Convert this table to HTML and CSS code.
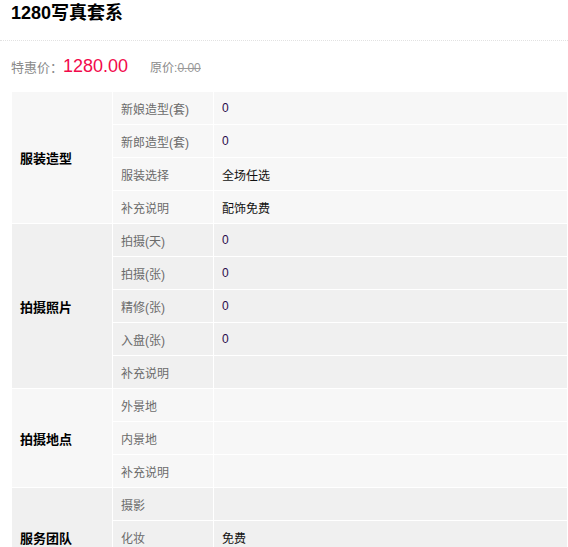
FILE: index.html
```html
<!DOCTYPE html>
<html lang="zh-CN">
<head>
    <meta charset="UTF-8">
    <meta name="viewport" content="width=device-width, initial-scale=1.0">
    <title>1280写真套系</title>
    <link rel="stylesheet" href="styles.css">
</head>
<body>
    <div class="package">
        <h2 class="package-title">1280写真套系</h2>
        <div class="price-row">
            <span class="price-label">特惠价：</span>
            <span class="price-now">1280.00</span>
            <span class="price-old">原价:<s>0.00</s></span>
        </div>

        <table class="detail-table">
            <colgroup>
                <col class="col-group">
                <col class="col-label">
                <col>
            </colgroup>
            <tbody class="group-light">
                <tr><th rowspan="4">服装造型</th><td class="label">新娘造型(套)</td><td class="num">0</td></tr>
                <tr><td class="label">新郎造型(套)</td><td class="num">0</td></tr>
                <tr><td class="label">服装选择</td><td>全场任选</td></tr>
                <tr><td class="label">补充说明</td><td>配饰免费</td></tr>
            </tbody>
            <tbody class="group-dark">
                <tr><th rowspan="5">拍摄照片</th><td class="label">拍摄(天)</td><td class="num">0</td></tr>
                <tr><td class="label">拍摄(张)</td><td class="num">0</td></tr>
                <tr><td class="label">精修(张)</td><td class="num">0</td></tr>
                <tr><td class="label">入盘(张)</td><td class="num">0</td></tr>
                <tr><td class="label">补充说明</td><td></td></tr>
            </tbody>
            <tbody class="group-light">
                <tr><th rowspan="3">拍摄地点</th><td class="label">外景地</td><td></td></tr>
                <tr><td class="label">内景地</td><td></td></tr>
                <tr><td class="label">补充说明</td><td></td></tr>
            </tbody>
            <tbody class="group-dark">
                <tr><th rowspan="3">服务团队</th><td class="label">摄影</td><td></td></tr>
                <tr><td class="label">化妆</td><td>免费</td></tr>
                <tr><td class="label">补充说明</td><td></td></tr>
            </tbody>
        </table>
    </div>
</body>
</html>
```

FILE: styles.css
```css
body {
    margin: 0;
    font-family: "Liberation Sans", "Noto Sans CJK SC", sans-serif;
    background-color: #ffffff;
    color: #333;
    overflow: hidden;
}

.package-title {
    margin: 0;
    padding: 1px 0 15px 11px;
    font-size: 18px;
    line-height: 24px;
    font-weight: bold;
    color: #000;
    border-bottom: 1px dotted #e2e2e2;
}

/* Price line */
.price-row {
    height: 51px;
    display: flex;
    align-items: center;
    padding-left: 11px;
}

.price-label {
    font-size: 13px;
    color: #8a8a8a;
}

.price-now {
    font-size: 18px;
    color: #f2094b;
    margin-right: 22px;
}

.price-old {
    font-size: 12px;
    color: #8a8a8a;
}

.price-old s {
    color: #999;
}

/* Detail table */
.detail-table {
    margin-left: 12px;
    width: 556px;
    border-collapse: separate;
    border-spacing: 0;
    table-layout: fixed;
    font-size: 12px;
}

.col-group,
.col-label {
    width: 101px;
}

.detail-table th,
.detail-table td {
    height: 32px;
    padding: 0 0 0 8px;
    border-right: 1px solid #ffffff;
    border-bottom: 1px solid #ffffff;
    text-align: left;
    vertical-align: middle;
}

.detail-table th {
    font-size: 13px;
    font-weight: bold;
    color: #000;
}

.detail-table td {
    color: #111;
}

.detail-table td.label {
    color: #6b6b6b;
}

.detail-table td.num {
    color: #2a0a4a;
}

.group-light {
    background-color: #f7f7f7;
}

.group-dark {
    background-color: #f0f0f0;
}
```
